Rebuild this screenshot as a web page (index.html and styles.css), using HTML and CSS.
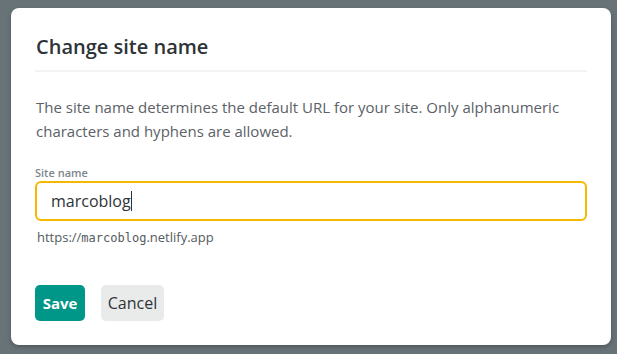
FILE: index.html
```html
<!DOCTYPE html>
<html>
<head>
<meta charset="utf-8">
<link rel="stylesheet" href="styles.css">
</head>
<body>
<div class="backdrop">
  <div class="modal">
    <h2 class="title">Change site name</h2>
    <p class="desc">The site name determines the default URL for your site. Only alphanumeric characters and hyphens are allowed.</p>
    <label class="label">Site name</label>
    <div class="input"><span class="value">marcoblog</span><span class="caret"></span></div>
    <div class="help">https://<span class="mono">marcoblog</span>.netlify.app</div>
    <div class="actions">
      <button class="btn btn-save">Save</button>
      <button class="btn btn-cancel">Cancel</button>
    </div>
  </div>
</div>
</body>
</html>
```
FILE: styles.css
```css
html, body {
  margin: 0;
  padding: 0;
  width: 617px;
  height: 354px;
  overflow: hidden;
  background: #687378;
  font-family: "Open Sans", "Noto Sans", sans-serif;
}
.backdrop {
  padding: 8px 6px 0 11px;
}
.modal {
  width: 600px;
  height: 337px;
  box-sizing: border-box;
  background: #fff;
  border-radius: 8px;
  box-shadow: 0 2px 4px rgba(0,0,0,0.25);
  padding: 24px 24px 0 24px;
  display: flex;
  flex-direction: column;
}
.title {
  margin: 0;
  font-size: 20px;
  font-weight: 600;
  color: #2e3338;
  line-height: 30px;
  padding: 0 0 0 1px;
  height: 38px;
  border-bottom: 2px solid #f2f3f3;
}
.desc {
  margin: 23px 0 0 1px;
  font-size: 15px;
  line-height: 24px;
  color: #5b6167;
}
.label {
  margin-top: 22px;
  font-size: 11px;
  font-weight: 600;
  color: #7d858b;
  line-height: 16px;
}
.input {
  margin-top: 0;
  height: 40px;
  box-sizing: border-box;
  border: 2px solid #f5b800;
  border-radius: 6px;
  display: flex;
  align-items: center;
  padding-left: 14px;
  font-size: 16px;
  color: #2e3338;
}
.caret {
  display: inline-block;
  width: 1px;
  height: 20px;
  background: #2e3338;
}
.help {
  margin-top: 7px;
  font-size: 13px;
  color: #545b61;
  line-height: 18px;
  padding-left: 2px;
}
.mono {
  font-family: "DejaVu Sans Mono", monospace;
  font-size: 12px;
}
.actions {
  margin-top: 38px;
  display: flex;
  gap: 16px;
}
.btn {
  font-family: inherit;
  font-size: 15px;
  height: 36px;
  border: none;
  border-radius: 5px;
  padding: 0 6px;
}
.btn-save {
  background: #009688;
  color: #fff;
  font-weight: 700;
  width: 50px;
}
.btn-cancel {
  background: #e9ebeb;
  color: #2e3338;
  font-size: 16px;
  width: 63px;
}
```
